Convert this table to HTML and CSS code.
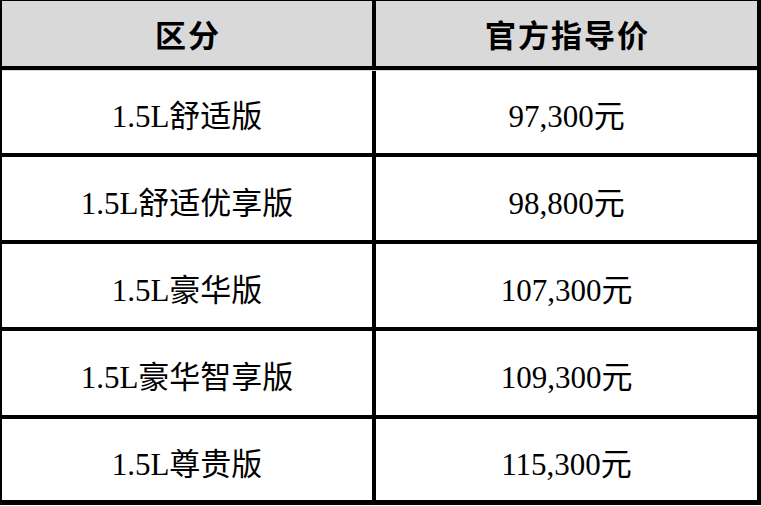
FILE: index.html
```html
<!DOCTYPE html>
<html lang="zh-CN">
<head>
<meta charset="utf-8">
<title>价格表</title>
<link rel="stylesheet" href="styles.css">
</head>
<body>
<div class="table">
  <div class="row head">
    <div class="cell c1">区分</div>
    <div class="cell c2">官方指导价</div>
  </div>
  <div class="row r1">
    <div class="cell c1">1.5L舒适版</div>
    <div class="cell c2">97,300元</div>
  </div>
  <div class="row r2">
    <div class="cell c1">1.5L舒适优享版</div>
    <div class="cell c2">98,800元</div>
  </div>
  <div class="row r3">
    <div class="cell c1">1.5L豪华版</div>
    <div class="cell c2">107,300元</div>
  </div>
  <div class="row r4">
    <div class="cell c1">1.5L豪华智享版</div>
    <div class="cell c2">109,300元</div>
  </div>
  <div class="row r5">
    <div class="cell c1">1.5L尊贵版</div>
    <div class="cell c2">115,300元</div>
  </div>
</div>
</body>
</html>
```
FILE: styles.css
```css
html, body {
  margin: 0;
  padding: 0;
  background: #ffffff;
}
.table {
  width: 755px;
  border-top: 1px solid #000;
  border-left: 2px solid #000;
  border-right: 4px solid #000;
  border-bottom: 5px solid #000;
  font-family: "Liberation Serif", "Noto Sans CJK SC", serif;
  color: #000;
}
.row {
  display: grid;
  grid-template-columns: 370px 4px 381px;
}
.cell {
  display: flex;
  align-items: center;
  justify-content: center;
  font-size: 31px;
  padding-top: 3px;
}
.c1 {
  border-right: 4px solid #000;
  grid-column: 1 / 3;
}
.c2 {
  grid-column: 3;
}
.head {
  height: 65px;
  background: #d9d9d9;
  border-bottom: 4px solid #000;
  box-shadow: 0 1px 0 #d9d9d9;
  margin-bottom: 1px;
}
.head .cell {
  font-family: "Noto Sans CJK SC", sans-serif;
  font-weight: 700;
  font-size: 31px;
  letter-spacing: 2px;
  padding-top: 0;
  padding-left: 2px;
}
.r1 { height: 82px; }
.r2 { height: 83px; border-top: 4px solid #000; }
.r3 { height: 83px; border-top: 4px solid #000; }
.r4 { height: 84px; border-top: 4px solid #000; }
.r5 { height: 81px; border-top: 4px solid #000; }
```
